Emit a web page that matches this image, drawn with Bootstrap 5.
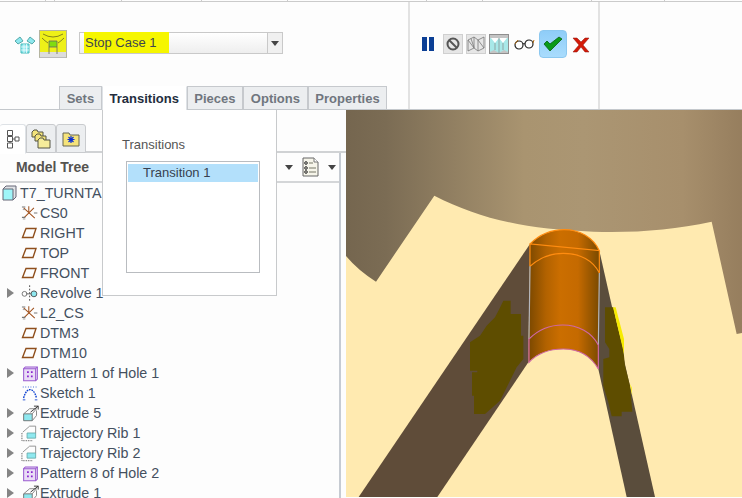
<!DOCTYPE html>
<html lang="en">
<head>
<meta charset="UTF-8">
<title>Flexible Component Stop Case</title>
<link href="https://cdn.jsdelivr.net/npm/bootstrap@5.3.0/dist/css/bootstrap.min.css" rel="stylesheet">
<style>
html, body { margin: 0; width: 742px; height: 498px; overflow: hidden; background: #fdfdfd; font-family: "Liberation Sans", Arial, sans-serif; font-size: 14.3px; color: #44505f; }
.app-frame { position: relative; width: 742px; height: 498px; overflow: hidden; }
.tick-strip { height: 2px; border-bottom: 1px solid #cbcbcb; }
.tick-strip span { display: block; float: left; height: 1px; border-right: 1px solid #cbcbcb; }
.ribbon { height: 108px; border-bottom: 1px solid #c4c8cc; }
.ribbon-main { width: 410px; border-right: 2px solid #e2e2e2; }
.ribbon-tools { width: 190px; border-right: 2px solid #e2e2e2; padding: 32px 0 0 11px; }
.mode-row { height: 85px; padding: 28px 0 0 14px; }
.mode-on { width: 28px; height: 28px; margin: 0 12px 0 3px; background: linear-gradient(#eef018 82%, #dcdcdc 82%); border: 1px solid #b5b5a0; border-bottom-color: #bbb; }
.combo { width: 204px; height: 22px; margin-top: 2px; border: 1px solid #c9c9c9; background: linear-gradient(#fff, #eee); }
.combo-text { flex: 1; padding-left: 4px; font-size: 13px; }
.combo-text mark { background: #f6f600; padding: 3px 12px 3px 1px; color: #3d4650; line-height: 19px; }
.combo-btn { width: 15px; padding: 0; border: 0; border-left: 1px solid #c9c9c9; border-radius: 0; background: #f0f0f0; }
.caret-down { display: inline-block; width: 0; height: 0; border: 4px solid transparent; border-top: 5px solid #444; border-bottom: 0; }
.ribbon-tabs { margin-left: 59px; height: 23px; border: 0; flex-wrap: nowrap; }
.ribbon-tabs .nav-link { height: 23px; padding: 3px 6.7px 0; margin: 0; font-size: 13px; line-height: 17px; font-weight: 700; color: #70767e; background: #eceef0; border: 1px solid #c6c9cd; border-bottom: 0; border-radius: 0; }
.ribbon-tabs .nav-link.active { color: #232d3d; background: #fff; border-top-color: #fff; height: 24px; }
.tool-sq { width: 20px; height: 20px; border: 1px solid #d0d0d0; background: #e6e6e6; }
.tool-sq.tool-on { background: #c4c4c4; border-color: #8f8f8f; }
.tool-ok { width: 28px; height: 28px; margin-top: -4px; background: linear-gradient(#8fcdf8, #a9dcfd); border: 1px solid #8cc8f0; border-radius: 4px; }
.work-area { height: 388px; }
.left-panel { width: 346px; }
.tree-tabs { margin-top: 14px; height: 29px; border-bottom: 2px solid #d0d2d4; flex-wrap: nowrap; }
.tree-tabs .nav-link { width: 30px; height: 29px; padding: 0; margin: 0; background: #eceef0; border: 1px solid #c9cbce; border-radius: 3px 3px 0 0; }
.tree-tabs .nav-link.active { width: 26px; background: #fff; border-bottom-color: #fff; border-left: 0; height: 30px; }
.tree-wrap { border-right: 2px solid #c6cbd2; margin-right: 5px; height: 345px; overflow: hidden; }
.tree-head { height: 30px; border-bottom: 2px solid #d4d6d8; }
.tree-title { width: 105px; text-align: center; font-size: 14px; font-weight: 700; color: #55534f; line-height: 28px; }
.tree-menu { margin-left: auto; width: 54px; padding-right: 3px; }
.tree-row { height: 20px; line-height: 20px; padding-left: 7px; white-space: nowrap; }
.tree-row.tree-root { padding-left: 2px; }
.tree-arrow { width: 14px; flex: none; }
.tree-arrow i { display: block; width: 0; height: 0; border: 5px solid transparent; border-left: 7px solid #858585; border-right: 0; }
.tree-icon { width: 19px; height: 18px; flex: none; }
.tree-root .tree-icon { width: 18px; }
.pop-panel { position: absolute; left: 102px; top: 110px; width: 175px; height: 186px; background: #fff; border: 1px solid #c8cacc; border-top: 0; padding: 27px 0 0 19px; }
.pop-label { line-height: 15px; font-size: 13px; color: #555; margin-bottom: 9px; }
.pop-list { width: 134px; height: 112px; margin-left: 4px; border: 1px solid #b9bcc0; border-radius: 0; padding: 2px 1px 1px; background: #fff; }
.pop-list .list-group-item { background: #b3e0fb; border: 0; border-radius: 0; padding: 0 0 0 15px; height: 18px; line-height: 18px; font-size: 13px; color: #37404f; }
.model-view { width: 396px; height: 387px; display: block; }
</style>
</head>
<body>
<svg width="0" height="0" class="position-absolute">
  <defs>
    <symbol id="ic-plane" viewBox="0 0 19 18"><path d="M5 4.500h10l-3 9H1.500z" fill="none" stroke="#8f4f1d" stroke-width="1.4"/></symbol>
    <symbol id="ic-cs" viewBox="0 -1.500 22 21"><path d="M3 3l13 12M3 15L15 3M9 1v8" stroke="#a0501c" stroke-width="1.2" fill="none"/><path d="M1 2l4 0M1 14h4M15 9l4 0" stroke="#777" stroke-width="1.4"/><path d="M2 5h3M2 16h3" stroke="#999"/></symbol>
    <symbol id="ic-rev" viewBox="0 -1.500 22 21"><circle cx="4" cy="10" r="2.800" fill="none" stroke="#666"/><circle cx="15" cy="10" r="3.400" fill="#8fe8ef" stroke="#444"/><path d="M10 0v18" stroke="#333" stroke-dasharray="2 2"/><path d="M6 10h6" stroke="#555"/></symbol>
    <symbol id="ic-pat" viewBox="0 -1.500 22 21"><path d="M3 4l2-2h14v14l-2 2H3z" fill="#e9dcf6" stroke="#9a5bd0" stroke-width="1.200"/><path d="M3 4h14v14M17 4l2-2" fill="none" stroke="#9a5bd0" stroke-width="1.200"/><path d="M7 8h2M11.500 8h2M7 13h2M11.500 13h2" stroke="#8a20d0" stroke-width="2"/></symbol>
    <symbol id="ic-sk" viewBox="0 -1.500 22 21"><path d="M3 15C5 7 8 5 10.500 5S16 7 18 15" fill="none" stroke="#0a3fd0" stroke-width="1.600" stroke-dasharray="2 1"/><path d="M2 2h17" stroke="#0a3fd0" stroke-dasharray="1 2"/><path d="M2 17h3M16 17h3" stroke="#0a3fd0"/></symbol>
    <symbol id="ic-ext" viewBox="0 -1.500 22 21"><path d="M3 10h10v8H3z" fill="#8fe8ef" stroke="#666"/><path d="M3 10l7-6h8l-5 6M13 18l5-6V6" fill="none" stroke="#777"/><path d="M11 8l9-7M15 1h5v4" fill="none" stroke="#222"/></symbol>
    <symbol id="ic-rib" viewBox="0 -1.500 22 21"><path d="M7 9h10v6H7z" fill="#8fe8ef" stroke="#6aa"/><path d="M2 8l8-7h7v8" fill="none" stroke="#888"/><path d="M1 9v9h13" fill="none" stroke="#333" stroke-dasharray="1 1"/></symbol>
  </defs>
</svg>

<div class="app-frame">
  <div class="tick-strip"><span style="width:46px"></span><span style="width:9px"></span><span style="width:67px"></span><span style="width:80px"></span><span style="width:86px"></span><span style="width:139px"></span><span style="width:56px"></span><span style="width:109px"></span><span style="width:73px"></span></div>

  <div class="ribbon d-flex">
    <div class="ribbon-main d-flex flex-column">
      <div class="mode-row d-flex align-items-start">
        <svg width="22" height="20" viewBox="0 0 22 20" class="mt-1">
          <path d="M1 7l5-4 3 4-5 3zM21 7l-5-4-3 4 5 3z" fill="#8fe8ef" stroke="#5aa"/>
          <path d="M7 10h8v9H7z" fill="#8fe8ef" stroke="#4bb"/>
          <path d="M7 13h8M7 16h8M10 10v9M12.500 10v9" stroke="#fff" stroke-width=".7"/>
        </svg>
        <div class="mode-on">
          <svg width="26" height="26" viewBox="0 0 26 26">
            <path d="M2 7q3 3 6 5M24 7q-3 3-6 5M3 3q10 6 20 0" fill="none" stroke="#6a6a20" stroke-width=".8"/>
            <path d="M9 10h8v6H9z" fill="#7fdc10"/>
            <path d="M9 16v7M17 16v7M9 10h8v6H9z" fill="none" stroke="#666" stroke-width=".8"/>
          </svg>
        </div>
        <div class="combo d-flex">
          <div class="combo-text"><mark>Stop Case 1</mark></div>
          <button type="button" class="btn combo-btn d-flex align-items-center justify-content-center"><span class="caret-down"></span></button>
        </div>
      </div>
      <ul class="nav nav-tabs ribbon-tabs">
        <li class="nav-item"><a class="nav-link" href="#">Sets</a></li>
        <li class="nav-item"><a class="nav-link active" href="#">Transitions</a></li>
        <li class="nav-item"><a class="nav-link" href="#">Pieces</a></li>
        <li class="nav-item"><a class="nav-link" href="#">Options</a></li>
        <li class="nav-item"><a class="nav-link" href="#">Properties</a></li>
      </ul>
    </div>

    <div class="ribbon-tools d-flex align-items-start">
      <svg width="14" height="20" viewBox="0 0 14 20" class="me-2">
        <path d="M1 3h5v14H1zM8 3h5v14H8z" fill="#0b3f95"/>
      </svg>
      <div class="tool-sq d-flex align-items-center justify-content-center" style="margin-left:1px">
        <svg width="14" height="14" viewBox="0 0 14 14"><circle cx="7" cy="7" r="5.500" fill="none" stroke="#555" stroke-width="2"/><path d="M3 3l8 8" stroke="#555" stroke-width="2"/></svg>
      </div>
      <div class="tool-sq d-flex align-items-center justify-content-center" style="margin-left:3px">
        <svg width="18" height="18" viewBox="0 0 18 18"><path d="M1 5l6-3 4 3 6-3v11l-6 3-4-3-6 3zM7 2v11M11 5v11M1 5l6 8M11 5l6 8M4 3.500l3 9" fill="none" stroke="#777" stroke-width=".8"/></svg>
      </div>
      <div class="tool-sq tool-on d-flex align-items-center justify-content-center" style="margin-left:3px">
        <svg width="18" height="18" viewBox="0 0 18 18"><path d="M0 3h18v14l-4-2-5 3-5-3-4 2z" fill="#a8e8e8"/><path d="M1 3l4 5 4-5 4 5 4-5z" fill="#fff"/><path d="M5 8v7M9 3v15M13 8v7" stroke="#888" stroke-width=".7"/></svg>
      </div>
      <svg width="22" height="20" viewBox="0 0 22 20" class="ms-1">
        <circle cx="6" cy="11" r="4" fill="#fff" stroke="#222" stroke-width="1.200"/><circle cx="16" cy="10" r="4" fill="#fff" stroke="#222" stroke-width="1.200"/>
        <path d="M10 10q1-1 2 0" fill="none" stroke="#222"/><path d="M2 10l3-4M20 9l1-3" fill="none" stroke="#b06a10"/>
      </svg>
      <div class="tool-ok d-flex align-items-center justify-content-center" style="margin-left:4px">
        <svg width="20" height="16" viewBox="0 0 20 16"><path d="M1 8l3-3 3 3 9-7 3 2L7 15z" fill="#0a9a18" stroke="#05600f" stroke-width=".8"/></svg>
      </div>
      <svg width="18" height="16" viewBox="0 0 18 16" style="margin:3px 0 0 5px">
        <path d="M1 1h4l4 4 4-4h4l-6 7 6 7h-4l-4-5-4 5H1l6-7z" fill="#d31a08" stroke="#8e1208" stroke-width=".5"/>
      </svg>
    </div>
  </div>

  <div class="work-area d-flex">
    <div class="left-panel">
      <ul class="nav nav-tabs tree-tabs">
        <li class="nav-item"><a class="nav-link active d-flex align-items-center justify-content-center" href="#">
          <svg width="14" height="20" viewBox="0 0 14 20"><path d="M1.500 1.500h5v5h-5zM1.500 14h5v5h-5zM1.500 7.500h5v5h-5zM9 8h4v4H9zM4 6.500v1M4 12.500v1.500M6.500 10H9" fill="none" stroke="#555"/></svg>
        </a></li>
        <li class="nav-item"><a class="nav-link d-flex align-items-center justify-content-center" href="#">
          <svg width="20" height="20" viewBox="0 0 20 20"><path d="M1 3l2-2h3l1 2h5v5H1z" fill="#f2e37a" stroke="#554"/><path d="M4 7l2-2h3l1 2h5v5H4z" fill="#f2e37a" stroke="#554"/><path d="M7 11l2-2h3l1 2h6v8H7z" fill="#f5ec9a" stroke="#554"/></svg>
        </a></li>
        <li class="nav-item"><a class="nav-link d-flex align-items-center justify-content-center" href="#">
          <svg width="18" height="16" viewBox="0 0 18 16"><path d="M1 4V2h6l1 2h9v11H1z" fill="#f5e37a" stroke="#665"/><path d="M9 5v7M5.500 8.500h7M6.500 6l5 5M11.500 6l-5 5" stroke="#0b2fd0" stroke-width="1.200"/></svg>
        </a></li>
      </ul>
      <div class="tree-wrap">
        <div class="tree-head d-flex align-items-center">
          <div class="tree-title">Model Tree</div>
          <div class="tree-menu d-flex align-items-center justify-content-between">
            <span class="caret-down"></span>
            <svg width="17" height="20" viewBox="0 0 17 20"><path d="M1 1h11l4 4v14H1z" fill="#f6f5ea" stroke="#666"/><path d="M12 1v4h4" fill="#fff" stroke="#777"/><circle cx="4" cy="6" r="1.300" fill="none" stroke="#222"/><circle cx="4" cy="11" r="1.300" fill="none" stroke="#222"/><circle cx="4" cy="15" r="1.300" fill="none" stroke="#222"/><path d="M7 6h4M7 11h7M7 15h7" stroke="#776"/></svg>
            <span class="caret-down"></span>
          </div>
        </div>
        <div class="tree-row tree-root d-flex align-items-center"><svg class="tree-icon" viewBox="0 0 18 18"><path d="M1 5l3-3h10v11l-3 3z" fill="#dfe3e6" stroke="#667"/><path d="M1 5h10v11H1z" fill="#9ff5f8" stroke="#667"/></svg>T7_TURNTABLE</div>
        <div class="tree-row d-flex align-items-center"><span class="tree-arrow"></span><svg class="tree-icon"><use href="#ic-cs"/></svg>CS0</div>
        <div class="tree-row d-flex align-items-center"><span class="tree-arrow"></span><svg class="tree-icon"><use href="#ic-plane"/></svg>RIGHT</div>
        <div class="tree-row d-flex align-items-center"><span class="tree-arrow"></span><svg class="tree-icon"><use href="#ic-plane"/></svg>TOP</div>
        <div class="tree-row d-flex align-items-center"><span class="tree-arrow"></span><svg class="tree-icon"><use href="#ic-plane"/></svg>FRONT</div>
        <div class="tree-row d-flex align-items-center"><span class="tree-arrow"><i></i></span><svg class="tree-icon"><use href="#ic-rev"/></svg>Revolve 1</div>
        <div class="tree-row d-flex align-items-center"><span class="tree-arrow"></span><svg class="tree-icon"><use href="#ic-cs"/></svg>L2_CS</div>
        <div class="tree-row d-flex align-items-center"><span class="tree-arrow"></span><svg class="tree-icon"><use href="#ic-plane"/></svg>DTM3</div>
        <div class="tree-row d-flex align-items-center"><span class="tree-arrow"></span><svg class="tree-icon"><use href="#ic-plane"/></svg>DTM10</div>
        <div class="tree-row d-flex align-items-center"><span class="tree-arrow"><i></i></span><svg class="tree-icon"><use href="#ic-pat"/></svg>Pattern 1 of Hole 1</div>
        <div class="tree-row d-flex align-items-center"><span class="tree-arrow"></span><svg class="tree-icon"><use href="#ic-sk"/></svg>Sketch 1</div>
        <div class="tree-row d-flex align-items-center"><span class="tree-arrow"><i></i></span><svg class="tree-icon"><use href="#ic-ext"/></svg>Extrude 5</div>
        <div class="tree-row d-flex align-items-center"><span class="tree-arrow"><i></i></span><svg class="tree-icon"><use href="#ic-rib"/></svg>Trajectory Rib 1</div>
        <div class="tree-row d-flex align-items-center"><span class="tree-arrow"><i></i></span><svg class="tree-icon"><use href="#ic-rib"/></svg>Trajectory Rib 2</div>
        <div class="tree-row d-flex align-items-center"><span class="tree-arrow"><i></i></span><svg class="tree-icon"><use href="#ic-pat"/></svg>Pattern 8 of Hole 2</div>
        <div class="tree-row d-flex align-items-center"><span class="tree-arrow"><i></i></span><svg class="tree-icon"><use href="#ic-ext"/></svg>Extrude 1</div>
      </div>
    </div>

    <svg class="model-view" viewBox="18 3 1188 1161" preserveAspectRatio="none">
      <defs>
        <linearGradient id="metal" x1="0" x2="1" y1="0" y2="0">
          <stop offset="0" stop-color="#75664f"/><stop offset=".1" stop-color="#7b6c54"/><stop offset=".45" stop-color="#a99470"/><stop offset=".6" stop-color="#ab9673"/><stop offset=".85" stop-color="#a78f6c"/><stop offset="1" stop-color="#967e5e"/>
        </linearGradient>
        <linearGradient id="bore" x1="0" x2="1" y1="0" y2="0">
          <stop offset="0" stop-color="#7a4800"/><stop offset=".25" stop-color="#b26200"/><stop offset=".45" stop-color="#cb6e00"/><stop offset=".7" stop-color="#c56a00"/><stop offset="1" stop-color="#7a4a00"/>
        </linearGradient>
      </defs>
      <rect x="18" y="3" width="1188" height="1161" fill="#ffeab0"/>
      <path d="M18 3H1206V672L1190 675L1115 338C1000 362 890 372 760 368C560 362 420 330 283 260L108 518Q55 485 18 441Z" fill="url(#metal)"/>
      <path d="M570 405L565 760L292 1164H56Z" fill="#5f4c39"/>
      <path d="M778 425L945 1164H860L775 780Z" fill="#5a4d3c"/>
      <path d="M490 575H512V615H543V680H550V750L530 775L480 875L435 915H402V860H396V790H412V785H390V700L420 680L440 650L465 625L478 600Z" fill="#5e4d00"/>
      <path d="M795 595H820L830 640L850 720L855 770L870 830L877 908H845V922H815L805 880L790 830V750L808 745V720L795 700Z" fill="#5e4d00"/>
      <path d="M819 595H827L852 690V735L844 700ZM870 825L877 862L875 835Z" fill="#f7ec00"/>
      <path d="M570 405C600 375 635 362 672 362C720 362 760 385 778 425V495L775 780C755 745 720 720 670 720C630 720 595 730 565 760Z" fill="url(#bore)"/>
      <g fill="none" stroke-width="3.500">
        <path d="M570 405C600 375 635 362 672 362C720 362 760 385 778 425L570 405V472M778 425V492M570 472C600 445 635 433 670 433C720 433 760 455 778 492" stroke="#ff8c10"/>
        <path d="M570 472L567 690M778 492L775 708" stroke="#b5b7bd"/>
        <path d="M567 690C597 660 630 648 668 648C715 648 755 670 775 708V780M567 690V760C595 730 630 720 670 720C720 720 755 745 775 780" stroke="#cf67a5"/>
      </g>
    </svg>
  </div>

  <div class="pop-panel">
    <div class="pop-label">Transitions</div>
    <div class="list-group pop-list">
      <div class="list-group-item">Transition 1</div>
    </div>
  </div>
</div>

<script src="https://cdn.jsdelivr.net/npm/bootstrap@5.3.0/dist/js/bootstrap.bundle.min.js"></script>
</body>
</html>
